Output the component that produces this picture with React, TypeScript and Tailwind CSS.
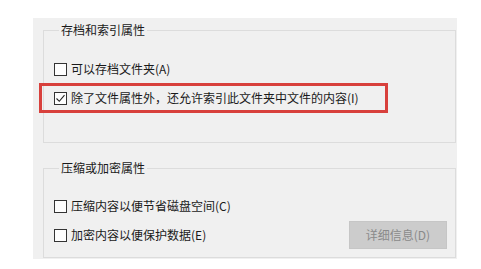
const font = "font-['Microsoft_YaHei','Noto_Sans_CJK_SC',sans-serif]"

const CheckBox = ({ checked }: { checked?: boolean }) => (
  <span className="flex h-[13px] w-[13px] shrink-0 items-center justify-center border border-[#333333] bg-[#fdfdfd]">
    {checked && (
      <svg width="11" height="11" viewBox="0 0 11 11">
        <path d="M1.5 5.5 L4.3 8.3 L9.5 2.2" fill="none" stroke="#222222" strokeWidth="1.1" />
      </svg>
    )}
  </span>
)

const Row = ({ label, checked }: { label: string; checked?: boolean }) => (
  <div className="flex h-[20px] items-center gap-[4px]">
    <CheckBox checked={checked} />
    <span className="text-[12px] leading-[16px] text-[#1a1a1a]">{label}</span>
  </div>
)

export default function App() {
  return (
    <div className={`h-[269px] w-[481px] overflow-hidden bg-white pt-[18px] ${font}`}>
      <div className="ml-[33px] flex h-[241px] w-[424px] flex-col bg-[#f0f0f0] pl-[10px] pr-[1px] pt-[4px]">
        <fieldset className="h-[121px] border border-[#dcdcdc] pl-[10px] pt-[21px]">
          <legend className="ml-[5px] px-[2px] text-[12px] leading-[16px] text-[#1a1a1a]">
            存档和索引属性
          </legend>
          <div className="flex flex-col gap-[9px]">
            <Row label="可以存档文件夹(A)" />
            <div className="relative">
              <Row label="除了文件属性外，还允许索引此文件夹中文件的内容(I)" checked />
              <div className="absolute -left-[15px] -top-[5px] h-[30px] w-[349px] border-[3px] border-[#d8403c]" />
            </div>
          </div>
        </fieldset>

        <fieldset className="mt-[17px] h-[98px] border border-[#dcdcdc] pl-[10px] pr-[8px] pt-[20px]">
          <legend className="ml-[5px] px-[2px] text-[12px] leading-[16px] text-[#1a1a1a]">
            压缩或加密属性
          </legend>
          <div className="flex flex-col gap-[5px]">
            <Row label="压缩内容以便节省磁盘空间(C)" />
            <div className="flex h-[28px] items-center justify-between">
              <Row label="加密内容以便保护数据(E)" />
              <button
                disabled
                className="h-[28px] w-[98px] border border-[#c6c6c6] bg-[#cccccc] text-[12px] leading-[16px] text-[#8a8a8a]"
              >
                详细信息(D)
              </button>
            </div>
          </div>
        </fieldset>
      </div>
    </div>
  )
}
